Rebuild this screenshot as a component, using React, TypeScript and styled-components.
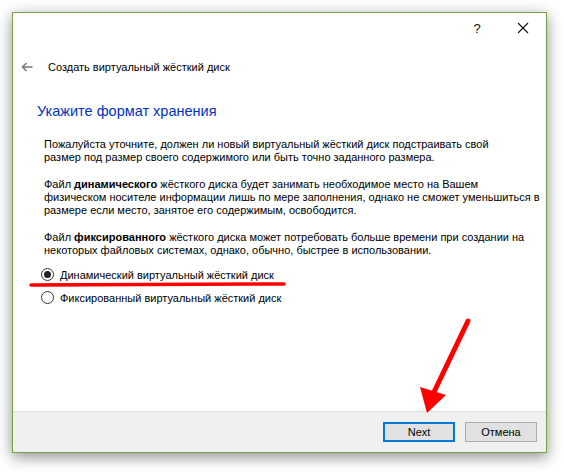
import styled, { createGlobalStyle } from 'styled-components';

const GlobalStyle = createGlobalStyle`
  html, body {
    margin: 0;
    padding: 0;
    background: #ffffff;
  }
  body {
    font-family: "Liberation Sans", Arial, sans-serif;
  }
`;

const App: React.FC = () => {
  return (
    <Page>
      <GlobalStyle />
      <Window>
        <TitleBar>
          <TitleButton>?</TitleButton>
          <TitleButton>
            <svg width="12" height="12" viewBox="0 0 12 12">
              <path d="M1 1 L11 11 M11 1 L1 11" stroke="#111" strokeWidth="1.1" fill="none" />
            </svg>
          </TitleButton>
        </TitleBar>
        <Header>
          <BackArrow>
            <svg width="12" height="10" viewBox="0 0 12 10">
              <path d="M11.5 5 H1.5 M5.5 1 L1.5 5 L5.5 9" stroke="#7a7a7a" strokeWidth="1.6" fill="none" />
            </svg>
          </BackArrow>
          <WizardTitle>Создать виртуальный жёсткий диск</WizardTitle>
        </Header>
        <Body>
          <Heading>Укажите формат хранения</Heading>
          <Paragraph>
            Пожалуйста уточните, должен ли новый виртуальный жёсткий диск подстраивать свой
            <br />
            размер под размер своего содержимого или быть точно заданного размера.
          </Paragraph>
          <Paragraph>
            Файл <b>динамического</b> жёсткого диска будет занимать необходимое место на Вашем
            <br />
            физическом носителе информации лишь по мере заполнения, однако не сможет уменьшиться в
            <br />
            размере если место, занятое его содержимым, освободится.
          </Paragraph>
          <Paragraph>
            Файл <b>фиксированного</b> жёсткого диска может потребовать больше времени при создании на
            <br />
            некоторых файловых системах, однако, обычно, быстрее в использовании.
          </Paragraph>
          <Options>
            <Option>
              <Radio $checked />
              <span>Динамический виртуальный жёсткий диск</span>
            </Option>
            <Option>
              <Radio />
              <span>Фиксированный виртуальный жёсткий диск</span>
            </Option>
          </Options>
        </Body>
        <Footer>
          <Button $default>Next</Button>
          <Button>Отмена</Button>
        </Footer>
      </Window>
      <Annotations width="564" height="472" viewBox="0 0 564 472">
        <path d="M31 285 L284 284" stroke="#ff0000" strokeWidth="3.5" strokeLinecap="round" />
        <path d="M468 321 L434 392" stroke="#ff0000" strokeWidth="5" strokeLinecap="round" />
        <path d="M420 387 L427 413 L446 395 Z" fill="#ff0000" />
      </Annotations>
    </Page>
  );
};

const Page = styled.div`
  position: relative;
  width: 564px;
  height: 472px;
  padding: 12px 0 0 12px;
  box-sizing: border-box;
  overflow: hidden;
`;

const Window = styled.div`
  width: 535px;
  height: 441px;
  box-sizing: border-box;
  border: 1px solid #76a043;
  background: #ffffff;
  box-shadow: 0 4px 14px rgba(0, 0, 0, 0.45);
  display: flex;
  flex-direction: column;
  color: #000000;
`;

const TitleBar = styled.div`
  height: 30px;
  display: flex;
  justify-content: flex-end;
  align-items: center;
`;

const TitleButton = styled.div`
  width: 46px;
  height: 30px;
  display: flex;
  align-items: center;
  justify-content: center;
  font-size: 13px;
  color: #111;
`;

const Header = styled.div`
  display: flex;
  align-items: center;
  height: 20px;
  margin-top: 14px;
  padding-left: 8px;
`;

const BackArrow = styled.div`
  width: 12px;
  height: 10px;
  display: flex;
  margin-right: 15px;
`;

const WizardTitle = styled.div`
  font-size: 11px;
  color: #000;
`;

const Body = styled.div`
  flex: 1;
  display: flex;
  flex-direction: column;
  padding: 24px 10px 0 24px;
`;

const Heading = styled.div`
  height: 20px;
  line-height: 20px;
  font-size: 14.5px;
  color: #0033bc;
  margin-bottom: 17px;
`;

const Paragraph = styled.p`
  margin: 0 0 14px 7px;
  font-size: 11px;
  line-height: 13px;
  white-space: nowrap;
  b {
    font-weight: bold;
  }
  &:last-of-type {
    margin-bottom: 11px;
  }
`;

const Options = styled.div`
  display: flex;
  flex-direction: column;
  gap: 10px;
  margin-left: 4px;
`;

const Option = styled.label`
  display: flex;
  align-items: center;
  gap: 6px;
  font-size: 11px;
  height: 13px;
`;

const Radio = styled.span<{ $checked?: boolean }>`
  width: 11px;
  height: 11px;
  border-radius: 50%;
  border: 1px solid #333;
  background: #fff;
  display: flex;
  align-items: center;
  justify-content: center;
  &::after {
    content: '';
    width: 7px;
    height: 7px;
    border-radius: 50%;
    background: ${({ $checked }) => ($checked ? '#222' : 'transparent')};
  }
`;

const Footer = styled.div`
  height: 41px;
  box-sizing: border-box;
  background: #f0f0f0;
  border-top: 1px solid #dfdfdf;
  display: flex;
  justify-content: flex-end;
  align-items: center;
  gap: 10px;
  padding-right: 9px;
`;

const Button = styled.div<{ $default?: boolean }>`
  width: 72px;
  height: 20px;
  box-sizing: border-box;
  background: #e1e1e1;
  border: ${({ $default }) => ($default ? '2px solid #0078d7' : '1px solid #adadad')};
  display: flex;
  align-items: center;
  justify-content: center;
  font-size: 11px;
  color: #000;
`;

const Annotations = styled.svg`
  position: absolute;
  left: 0;
  top: 0;
  pointer-events: none;
`;

export default App;
